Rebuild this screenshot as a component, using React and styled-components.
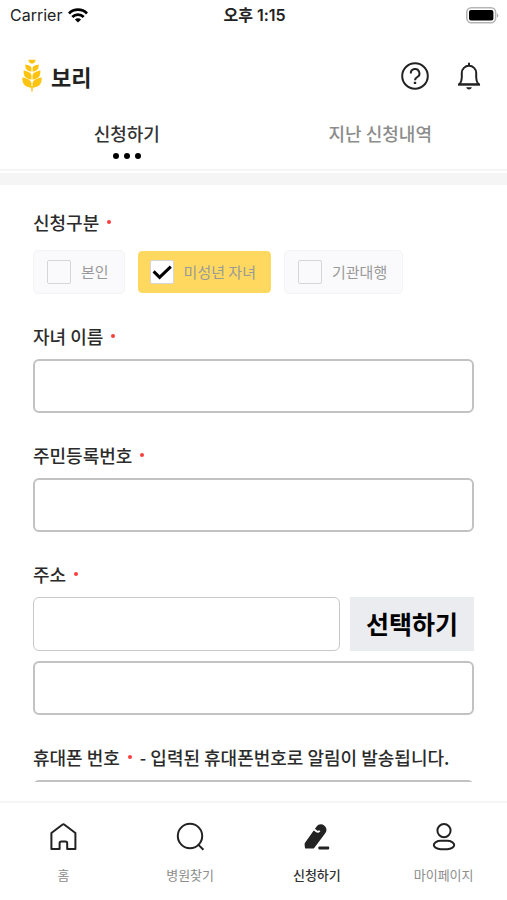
import React, { useState } from "react";
import styled, { createGlobalStyle } from "styled-components";

const GlobalStyle = createGlobalStyle`
	* {
		box-sizing: border-box;
	}
	body {
		margin: 0;
		background-color: #fff;
		color: #222;
		font-family: "Noto Sans CJK KR", sans-serif;
	}
	button, input {
		font-family: inherit;
	}
`;

const Page = styled.div`
	display: flex;
	flex-direction: column;
	height: 100vh;
`;

const StatusBar = styled.div`
	display: grid;
	grid-template-columns: 1fr auto 1fr;
	align-items: center;
	height: 30px;
	padding: 0 8px 0 10px;
	font-family: Inter, "Noto Sans CJK KR", sans-serif;
	font-size: 16px;
	line-height: 24px;
	svg {
		display: block;
	}
`;

const Carrier = styled.div`
	display: flex;
	align-items: center;
	gap: 6px;
`;

const Time = styled.time`
	font-weight: 600;
`;

const Battery = styled.div`
	justify-self: end;
`;

const Header = styled.header`
	display: flex;
	justify-content: space-between;
	align-items: center;
	height: 91px;
	padding: 0 24px 0 22px;
`;

const Logo = styled.h1`
	display: flex;
	align-items: center;
	gap: 9px;
	margin: 0;
	font-weight: 700;
	font-size: 22px;
	line-height: 32px;
`;

const Actions = styled.div`
	display: flex;
	gap: 26px;
`;

const IconButton = styled.button`
	display: flex;
	padding: 0;
	border: 0;
	background: none;
	color: #222;
`;

const Tabs = styled.nav`
	display: flex;
	height: 50px;
	border-bottom: 2px solid #f5f5f5;
`;

const Tab = styled.button`
	display: flex;
	flex: 1;
	flex-direction: column;
	align-items: center;
	gap: 8px;
	padding: 0;
	border: 0;
	background: none;
	font-weight: 500;
	font-size: 18px;
	line-height: 24px;
	color: ${(props) => (props.$active ? "#333" : "#8c8c8c")};
`;

const Dots = styled.span`
	display: flex;
	gap: 5px;
	i {
		width: 6px;
		height: 6px;
		border-radius: 50%;
		background-color: #000;
	}
`;

const Divider = styled.div`
	flex-shrink: 0;
	height: 12px;
	margin-top: 2px;
	background-color: #f5f5f5;
`;

const Form = styled.form`
	display: flex;
	flex: 1;
	flex-direction: column;
	gap: 30px;
	min-height: 0;
	margin-bottom: 19px;
	padding: 25px 33px 0;
	overflow: hidden;
`;

const Fieldset = styled.fieldset`
	min-width: 0;
	margin: 0;
	padding: 0;
	border: 0;
`;

const Label = styled.label`
	display: flex;
	align-items: center;
	gap: 8px;
	margin-bottom: 11px;
	padding: 0;
	font-weight: 500;
	font-size: 18px;
	line-height: 24px;
	color: #2b2b2b;
`;

const Legend = styled(Label)`
	margin-bottom: 16px;
`;

const Required = styled.span`
	width: 4px;
	height: 4px;
	border-radius: 50%;
	background-color: #f9403c;
`;

const Chips = styled.div`
	display: flex;
	gap: 12px;
`;

const Chip = styled.label`
	display: flex;
	align-items: center;
	gap: 10px;
	height: 44px;
	padding: 0 ${(props) => (props.$checked ? "15px 0 12px" : "15px 0 13px")};
	border: 1px solid ${(props) => (props.$checked ? "#fff" : "#f3f4f6")};
	border-radius: 5px;
	background-color: ${(props) => (props.$checked ? "#ffd95f" : "#fafafc")};
	background-clip: padding-box;
	font-size: 15px;
	line-height: 24px;
	color: #999;
`;

const CheckBox = styled.span`
	display: grid;
	input,
	svg {
		grid-area: 1 / 1;
	}
	input {
		appearance: none;
		width: 24px;
		height: 24px;
		margin: 0;
		border: 1px solid #d6d6d6;
		border-radius: 2px;
		background-color: ${(props) => (props.$checked ? "#fff" : "transparent")};
	}
	svg {
		pointer-events: none;
	}
`;

const TextInput = styled.input`
	display: block;
	width: 100%;
	min-width: 0;
	height: 54px;
	padding: 0 14px;
	border: ${(props) => (props.$light ? "1px solid #c8c8c8" : "2px solid #c2c2c2")};
	border-radius: 6px;
	background-color: #fff;
	font-size: 18px;
	outline: none;
`;

const Row = styled.div`
	display: flex;
	gap: 10px;
	margin-bottom: 10px;
`;

const SelectButton = styled.button`
	flex-shrink: 0;
	height: 54px;
	padding: 0 16px 2px;
	border: 0;
	background-color: #ebecf0;
	font-weight: 700;
	font-size: 25px;
	line-height: 36px;
	color: #000;
`;

const BottomBar = styled.nav`
	display: flex;
	flex-shrink: 0;
	height: 99px;
	border-top: 2px solid #f5f5f5;
`;

const BottomLink = styled.a`
	display: flex;
	flex: 1;
	flex-direction: column;
	align-items: center;
	gap: 12px;
	padding-top: 18px;
	font-size: 13px;
	line-height: 20px;
	font-weight: ${(props) => (props.$active ? 500 : 400)};
	color: ${(props) => (props.$active ? "#333" : "#8c8c8c")};
	text-decoration: none;
	svg {
		color: #222;
	}
`;

function WifiIcon() {
    return (
        <svg width="20" height="15" viewBox="0 0 20 15" fill="none" stroke="#000" strokeWidth="2.8">
            <path d="M1 5.4a12.8 12.8 0 0 1 18 0" />
            <path d="M4.3 8.9a8.1 8.1 0 0 1 11.4 0" />
            <path d="M10 14.6 6.9 11.5a4.4 4.4 0 0 1 6.2 0z" fill="#000" stroke="none" />
        </svg>
    );
}

function BatteryIcon() {
    return (
        <svg width="33" height="17" viewBox="0 0 33 17">
            <rect x="0.8" y="0.8" width="28.8" height="15" rx="4.5" fill="#fff" stroke="#b5b5b5" strokeWidth="1.6" />
            <rect x="3" y="3" width="24.4" height="10.6" rx="2" />
            <path d="M31 6.2c1.8.8 1.8 3.6 0 4.4z" fill="#aaa" />
        </svg>
    );
}

function WheatIcon() {
    return (
        <svg width="20" height="33" viewBox="0 0 20 33" fill="#fdc40f">
            <path d="M6.4.8h7.2C13.4 3 12.2 4.400 10 4.800 7.800 4.400 6.600 3 6.400.8z" />
            <path d="M3.2 5.400C6.800 5.800 9.500 7 9.500 9.400V12.600C5.400 12.200 3 10.200 3.200 5.400z" />
            <path d="M16.800 5.400C13.200 5.800 10.500 7 10.500 9.400V12.600C14.600 12.200 17 10.200 16.800 5.400z" />
            <path d="M1.600 11.400C6 12 9.500 13.800 9.500 16.600V20.600C4.200 20 1.200 17.400 1.600 11.400z" />
            <path d="M18.400 11.400C14 12 10.500 13.800 10.500 16.600V20.600C15.800 20 18.800 17.400 18.400 11.400z" />
            <path d="M.4 18.600C5 19.400 9.500 21.400 9.500 24.600V28.800C3.200 28-.2 25.200.4 18.600z" />
            <path d="M19.600 18.600C15 19.400 10.500 21.400 10.500 24.600V28.800C16.800 28 20.200 25.200 19.600 18.600z" />
            <path d="M9.300 27h1.400v5.600H9.300z" />
        </svg>
    );
}

function HelpIcon() {
    return (
        <svg width="28" height="28" viewBox="0 0 28 28" fill="none" stroke="currentColor" strokeWidth="2">
            <circle cx="14" cy="14" r="12.8" />
            <path d="M9.8 11.4a4.3 4.3 0 1 1 6.5 3.6c-1.5.9-2.3 1.5-2.3 3.2" />
            <path d="M14 19.8v2.2" strokeWidth="2.4" />
        </svg>
    );
}

function BellIcon() {
    return (
        <svg width="28" height="28" viewBox="0 0 28 28" fill="none" stroke="currentColor" strokeWidth="2">
            <path d="M14 .8v3" />
            <path d="M4.6 22.4c1.5-2.2 2.2-4.4 2.2-7V11a7.2 7.2 0 0 1 14.4 0v4.400c0 2.600.7 4.800 2.200 7z" />
            <path d="M3 22.4h22" />
            <path d="M11.2 25.2h5.6c-.3 1.4-1.4 2.2-2.8 2.2s-2.5-.8-2.8-2.2z" fill="currentColor" stroke="none" />
        </svg>
    );
}

function HomeIcon() {
    return (
        <svg width="32" height="32" viewBox="0 0 32 32" fill="none" stroke="currentColor" strokeWidth="2" strokeLinejoin="round">
            <path d="M4.4 28V12L15.3 3.7a1.8 1.8 0 0 1 2.2 0L28.4 12v16h-8.200v-5.800a1.800 1.800 0 0 0-1.800-1.800h-4a1.800 1.800 0 0 0-1.800 1.800V28z" />
        </svg>
    );
}

function SearchIcon() {
    return (
        <svg width="32" height="32" viewBox="0 0 32 32" fill="none" stroke="currentColor" strokeWidth="2">
            <circle cx="16" cy="15" r="12.2" />
            <path d="m24 23.4 5.4 5.4" />
        </svg>
    );
}

function PenIcon() {
    return (
        <svg width="32" height="32" viewBox="0 0 32 32" fill="currentColor">
            <path d="M4.2 21.4 15.4 5.8c1.800-2.600 5.200-3.200 7.800-1.400 2.600 1.900 3 5.200 1.200 7.600L13.600 26.400c-.6.8-1.200 1.200-2.200 1.200H5.200c-.8 0-1.200-.4-1.300-1.200l-.3-2.800c-.1-.9.1-1.500.6-2.200z" />
            {/* notch between the cap and the barrel */}
            <path d="M11.8 7.2l3.600 3c1.300 1 2.600.6 3.200-.6" fill="none" stroke="#fff" strokeWidth="2" />
            <rect x="17.4" y="25.6" width="10.8" height="2.8" rx="0.8" />
        </svg>
    );
}

function UserIcon() {
    return (
        <svg width="32" height="32" viewBox="0 0 32 32" fill="none" stroke="currentColor" strokeWidth="2">
            <circle cx="16" cy="9.6" r="6.6" />
            <rect x="5.8" y="19.8" width="20.4" height="8.4" rx="7" ry="4.2" />
        </svg>
    );
}

function Field({ id, label, children }) {
    return (
        <div>
            <Label htmlFor={id}>
                {label}
                <Required />
                {children}
            </Label>
            <TextInput id={id} />
        </div>
    );
}

const applicants = ["본인", "미성년 자녀", "기관대행"];

const menu = [
    { label: "홈", Icon: HomeIcon },
    { label: "병원찾기", Icon: SearchIcon },
    { label: "신청하기", Icon: PenIcon, active: true },
    { label: "마이페이지", Icon: UserIcon },
];

export default function App() {
    const [applicant, setApplicant] = useState("미성년 자녀");

    return (
        <Page>
            <GlobalStyle />
            <StatusBar>
                <Carrier>
                    Carrier
                    <WifiIcon />
                </Carrier>
                <Time>오후 1:15</Time>
                <Battery>
                    <BatteryIcon />
                </Battery>
            </StatusBar>
            <Header>
                <Logo>
                    <WheatIcon />
                    보리
                </Logo>
                <Actions>
                    <IconButton type="button" aria-label="도움말">
                        <HelpIcon />
                    </IconButton>
                    <IconButton type="button" aria-label="알림">
                        <BellIcon />
                    </IconButton>
                </Actions>
            </Header>
            <Tabs>
                <Tab type="button" $active>
                    신청하기
                    <Dots>
                        <i />
                        <i />
                        <i />
                    </Dots>
                </Tab>
                <Tab type="button">지난 신청내역</Tab>
            </Tabs>
            <Divider />
            <Form>
                <Fieldset>
                    <Legend as="legend">
                        신청구분
                        <Required />
                    </Legend>
                    <Chips>
                        {applicants.map((name) => (
                            <Chip key={name} $checked={name === applicant}>
                                <CheckBox $checked={name === applicant}>
                                    <input
                                        type="checkbox"
                                        checked={name === applicant}
                                        onChange={() => setApplicant(name)}
                                    />
                                    {name === applicant && (
                                        <svg width="24" height="24" viewBox="0 0 24 24" fill="none" stroke="#000" strokeWidth="3">
                                            <path d="m3.6 11.4 6 6L20.8 6.6" />
                                        </svg>
                                    )}
                                </CheckBox>
                                {name}
                            </Chip>
                        ))}
                    </Chips>
                </Fieldset>
                <Field id="child-name" label="자녀 이름" />
                <Field id="resident-number" label="주민등록번호" />
                <div>
                    <Label htmlFor="address">
                        주소
                        <Required />
                    </Label>
                    <Row>
                        <TextInput id="address" $light />
                        <SelectButton type="button">선택하기</SelectButton>
                    </Row>
                    <TextInput aria-label="상세 주소" />
                </div>
                <Field id="phone" label="휴대폰 번호">
                    - 입력된 휴대폰번호로 알림이 발송됩니다.
                </Field>
            </Form>
            <BottomBar>
                {menu.map(({ label, Icon, active }) => (
                    <BottomLink key={label} href="#" $active={active}>
                        <Icon />
                        {label}
                    </BottomLink>
                ))}
            </BottomBar>
        </Page>
    );
}
